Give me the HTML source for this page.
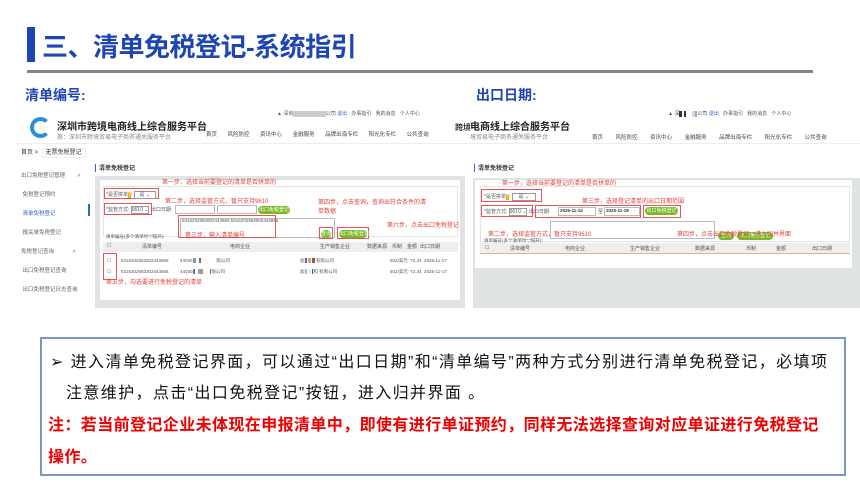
<!DOCTYPE html>
<html><head><meta charset="utf-8"><style>
*{margin:0;padding:0;box-sizing:border-box}
body{width:860px;height:492px;background:#fff;position:relative;overflow:hidden;font-family:"Liberation Sans","Noto Sans CJK SC",sans-serif}
.a{position:absolute;white-space:nowrap}
.t{font-size:6px;color:#555}
.r{color:#e0443c;font-size:6px}
.rb{position:absolute;border:1.5px solid #e8545a}
.g{background:#7bb827;color:#fff;border-radius:5px;font-size:5px;text-align:center;line-height:8px;height:8px;position:absolute}
.in{position:absolute;border:1px solid #bbb;background:#fff;height:9px}
</style></head><body>
<div class="a" style="left:27px;top:27px;width:8px;height:35px;background:#1d45b3"></div>
<div class="a" style="left:42px;top:27px;font-size:26px;font-weight:bold;color:#1d45b3;letter-spacing:-0.5px">三、清单免税登记-系统指引</div>
<div class="a" style="left:27px;top:70px;width:786px;height:3px;background:#858585"></div>
<div class="a" style="left:25px;top:85px;font-size:14px;font-weight:bold;color:#1d45b3">清单编号:</div>
<div class="a" style="left:476px;top:85px;font-size:14px;font-weight:bold;color:#1d45b3">出口日期:</div>

<!-- LEFT SCREENSHOT -->
<div class="a" style="left:15px;top:108px;width:455px;height:200px;background:#fff;overflow:hidden">
 <div class="a" style="left:0;top:35px;width:455px;height:1px;background:#eee"></div>
 <div class="a" style="left:15px;top:9px;width:21px;height:21px;border-radius:50%;border:4px solid #2a8fd6;border-right-color:#fff"></div>
 <div class="a" style="left:42px;top:10px;font-size:10px;font-weight:bold;color:#222">深圳市跨境电商线上综合服务平台</div>
 <div class="a t" style="left:42px;top:24px;font-size:6px;color:#888">原：深圳市跨境贸易电子商务通关服务平台</div>
 <div class="a t" style="left:262px;top:2px;font-size:5px">▲ 深圳<span style="background:#ccc;color:#ccc">xxxxxxxxxxxxx</span>公司 <span style="color:#36c">退出</span>&nbsp;&nbsp; 办事指引 &nbsp; 我的消息 &nbsp; 个人中心</div>
 <div class="a" style="left:191px;top:22px;font-size:5.5px;color:#444;word-spacing:9px">首页 风险防控 资讯中心 金融服务 品牌出海专栏 阳光化专栏 公共查询</div>
 <div class="a" style="left:440px;top:14px;font-size:8px;font-weight:bold;color:#333">跨境</div>
 <div class="a t" style="left:6px;top:39px;font-size:6px;color:#333">首页 &gt; &nbsp;<span style="border:1px solid #eee;padding:1px 3px">无票免税登记</span></div>
 <div class="a t" style="left:6px;top:59px;line-height:19px;font-size:5.5px;color:#666">出口免税登记管理 &nbsp;&nbsp;&nbsp;&nbsp;&nbsp;&nbsp;&nbsp;˄<br>&nbsp;免税登记预约<br>&nbsp;<span style="color:#36c">清单免税登记</span><br>&nbsp;报关单免税登记<br>免税登记查询 &nbsp;&nbsp;&nbsp;&nbsp;&nbsp;&nbsp;&nbsp;&nbsp;&nbsp;&nbsp;&nbsp;˄<br>&nbsp;出口免税登记查询<br>&nbsp;出口免税登记日志查询</div>
 <div class="a" style="left:73px;top:96px;width:2px;height:12px;background:#36c"></div>
 <div class="a" style="left:80px;top:56px;width:1px;height:8px;background:#36c"></div>
 <div class="a" style="left:84px;top:55px;font-size:6px;font-weight:bold;color:#333">清单免税登记</div>
 <div class="a" style="left:80px;top:68px;width:370px;height:132px;background:#dfe3e3"></div>
 <div class="a" style="left:85px;top:72px;width:360px;height:120px;background:#fff"></div>
 <div class="a" style="left:88px;top:78px;width:355px;height:51px;border:1px solid #e4e4e4"></div>
 <div class="rb" style="left:89px;top:80px;width:55px;height:11px"></div>
 <div class="a t" style="left:91px;top:83px;font-size:5px">*是否拼单<span style="background:#f4b000;color:#fff">?</span>: <span style="border:1px solid #999;padding:0 5px">是 ⌄</span></div>
 <div class="rb" style="left:89px;top:95px;width:48px;height:12px"></div>
 <div class="a t" style="left:91px;top:98px;font-size:5px">*监管方式: <span style="border:1px solid #999">9610 ⌄</span> 出口日期:</div>
 <div class="in" style="left:160px;top:97px;width:40px"></div><div class="a t" style="left:203px;top:98px;font-size:5px">至</div>
 <div class="in" style="left:202px;top:97px;width:40px"></div>
 <div class="g" style="left:243px;top:98px;width:32px">出口免税登记</div>
 <div class="in" style="left:165px;top:110px;width:155px;height:20px"></div>
 <div class="rb" style="left:163px;top:107px;width:98px;height:23px"></div>
 <div class="a t" style="left:167px;top:110px;font-size:4.5px">5316202582802443865;5316202582802443866</div>
 <div class="a t" style="left:91px;top:126px;font-size:4.5px">清单编号(多个清单时";"隔开):</div>
 <div class="rb" style="left:304px;top:119px;width:14px;height:12px"></div>
 <div class="g" style="left:306px;top:122px;width:10px">查询</div>
 <div class="rb" style="left:322px;top:119px;width:32px;height:12px"></div>
 <div class="g" style="left:324px;top:122px;width:28px">出口免税登记</div>
 <div class="a" style="left:88px;top:134px;width:355px;height:10px;background:#eee"></div>
 <div class="a t" style="left:92px;top:135px;font-size:5px">☐</div>
 <div class="a t" style="left:127px;top:135px;font-size:5px">清单编号</div>
 <div class="a t" style="left:215px;top:135px;font-size:5px">电商企业</div>
 <div class="a t" style="left:305px;top:135px;font-size:5px">生产销售企业</div>
 <div class="a t" style="left:352px;top:135px;font-size:5px">数据来源</div>
 <div class="a t" style="left:377px;top:135px;font-size:5px">币制</div>
 <div class="a t" style="left:392px;top:135px;font-size:5px">金额</div>
 <div class="a t" style="left:405px;top:135px;font-size:5px">出口日期</div>
 <div class="a t" style="left:92px;top:147px;font-size:4.5px;line-height:11px">☐<br>☐</div>
 <div class="a t" style="left:106px;top:147px;font-size:4.5px;line-height:11px">5316202583302443865<br>5316202583302443866</div>
 <div class="a t" style="left:165px;top:147px;font-size:4.5px;line-height:11px">44030<span style="background:#8899aa">&nbsp;&nbsp;&nbsp;</span> &nbsp;<span style="background:#7a6677">&nbsp;&nbsp;</span>&nbsp;&nbsp;&nbsp;&nbsp;&nbsp;&nbsp;&nbsp;&nbsp;&nbsp;&nbsp;&nbsp;&nbsp;限公司<br>44030<span style="background:#667799">&nbsp;&nbsp;</span> &nbsp;<span style="background:#88aacc">&nbsp;&nbsp;</span><span style="background:#c09070">&nbsp;&nbsp;</span>&nbsp;&nbsp;&nbsp;&nbsp;&nbsp;&nbsp;<span style="background:#777">&nbsp;</span>限公司</div>
 <div class="a t" style="left:285px;top:147px;font-size:4.5px;line-height:11px">加<span style="background:#5566aa">&nbsp;&nbsp;</span> <span style="background:#e9a060">&nbsp;&nbsp;</span> <span style="background:#8a5a6a">&nbsp;&nbsp;</span> 有限公司<br>加<span style="background:#99bbdd">&nbsp;&nbsp;</span> <span style="background:#ddeeff">&nbsp;&nbsp;</span> <span style="background:#555">&nbsp;</span>和 有限公司</div>
 <div class="a t" style="left:375px;top:147px;font-size:4.5px;line-height:11px">502/美元 &nbsp;72.34 &nbsp;2025-11-17<br>502/美元 &nbsp;72.34 &nbsp;2025-11-17</div>
 <div class="rb" style="left:88px;top:145px;width:14px;height:27px"></div>
 <div class="a r" style="left:147px;top:69px">第一步，选择当前要登记的清单是否拼单的</div>
 <div class="a r" style="left:150px;top:88px">第二步，选择监管方式，暂只支持9610</div>
 <div class="a r" style="left:170px;top:122px">第三步，输入清单编号</div>
 <div class="a r" style="left:303px;top:91px;line-height:9px">第四步，点击查询，查询出符合条件的清<br>单数据</div>
 <div class="a r" style="left:372px;top:112px">第六步，点击出口免税登记</div>
 <div class="a r" style="left:91px;top:169px">第五步，勾选要进行免税登记的清单</div>
</div>

<!-- RIGHT SCREENSHOT -->
<div class="a" style="left:470px;top:108px;width:390px;height:200px;background:#fff;overflow:hidden">
 <div class="a" style="left:0;top:35px;width:390px;height:1px;background:#eee"></div>
 <div class="a" style="left:0;top:10px;font-size:10px;font-weight:bold;color:#222">电商线上综合服务平台</div>
 <div class="a t" style="left:0;top:24px;font-size:6px;color:#888">境贸易电子商务通关服务平台</div>
 <div class="a t" style="left:198px;top:2px;font-size:5px">▲ 深<span style="background:#333">&nbsp;&nbsp;</span> <span style="background:#333">&nbsp;&nbsp;</span> &nbsp;&nbsp;&nbsp;<span style="background:#eccfd6">&nbsp;&nbsp;</span><span style="background:#99aadd">&nbsp;&nbsp;</span>公司 <span style="color:#36c">退出</span>&nbsp;&nbsp; 办事指引 &nbsp; 我的消息 &nbsp; 个人中心</div>
 <div class="a" style="left:122px;top:25px;font-size:5.5px;color:#444;word-spacing:11px">首页 风险防控 资讯中心 金融服务 品牌出海专栏 阳光化专栏 公共查询</div>
 <div class="a" style="left:4px;top:56px;width:1px;height:8px;background:#36c"></div>
 <div class="a" style="left:8px;top:55px;font-size:6px;font-weight:bold;color:#333">清单免税登记</div>
 <div class="a" style="left:3px;top:70px;width:387px;height:130px;background:#dfe3e3"></div>
 <div class="a" style="left:5px;top:72px;width:377px;height:88px;background:#fff"></div>
 <div class="a" style="left:10px;top:78px;width:370px;height:56px;border:1px solid #e4e4e4"></div>
 <div class="rb" style="left:11px;top:81px;width:61px;height:13px"></div>
 <div class="a t" style="left:14px;top:85px;font-size:5px">*是否拼单<span style="background:#f4b000;color:#fff">?</span>: <span style="border:1px solid #999;padding:0 6px">是 ⌄</span></div>
 <div class="rb" style="left:11px;top:97px;width:52px;height:12px"></div>
 <div class="a t" style="left:14px;top:100px;font-size:5px">*监管方式: <span style="border:1px solid #999">9610 ⌄</span> 出口日期:</div>
 <div class="rb" style="left:65px;top:97px;width:106px;height:13px"></div>
 <div class="in" style="left:88px;top:99px;width:38px"></div><div class="a t" style="left:90px;top:100px;font-size:4.5px;font-weight:bold;color:#333">2025-11-14</div>
 <div class="a t" style="left:128px;top:100px;font-size:5px">至</div>
 <div class="in" style="left:134px;top:99px;width:36px"></div><div class="a t" style="left:136px;top:100px;font-size:4.5px;font-weight:bold;color:#333">2025-11-18</div>
 <div class="rb" style="left:173px;top:97px;width:38px;height:13px"></div>
 <div class="g" style="left:175px;top:99px;width:33px">出口免税登记</div>
 <div class="in" style="left:80px;top:113px;width:165px;height:18px"></div>
 <div class="a t" style="left:14px;top:130px;font-size:4.5px">清单编号(多个清单时";"隔开):</div>
 <div class="g" style="left:248px;top:124px;width:16px">查询</div>
 <div class="g" style="left:267px;top:124px;width:36px">出口免税登记</div>
 <div class="a" style="left:10px;top:135px;width:370px;height:11px;background:#eee;border-bottom:1px solid #f0b070"></div>
 <div class="a t" style="left:15px;top:137px;font-size:5px">☐</div>
 <div class="a t" style="left:40px;top:137px;font-size:5px">清单编号</div>
 <div class="a t" style="left:95px;top:137px;font-size:5px">电商企业</div>
 <div class="a t" style="left:160px;top:137px;font-size:5px">生产销售企业</div>
 <div class="a t" style="left:225px;top:137px;font-size:5px">数据来源</div>
 <div class="a t" style="left:276px;top:137px;font-size:5px">币制</div>
 <div class="a t" style="left:306px;top:137px;font-size:5px">金额</div>
 <div class="a t" style="left:342px;top:137px;font-size:5px">出口日期</div>
 <div class="a r" style="left:32px;top:70px">第一步，选择当前要登记的清单是否拼单的</div>
 <div class="a r" style="left:112px;top:88px">第三步，选择登记清单的出口日期范围</div>
 <div class="a r" style="left:18px;top:121px">第二步，选择监管方式，暂只支持9610</div>
 <div class="a r" style="left:207px;top:121px">第四步，点击出口免税登记，进入归并界面</div>
</div>

<!-- TEXT BOX -->
<div class="a" style="left:40px;top:337px;width:806px;height:139px;border:2px solid #7a97c8"></div>
<div class="a" style="left:50px;top:347px;font-size:16px;color:#111;line-height:31px;letter-spacing:1.4px">➢ 进入清单免税登记界面，可以通过“出口日期”和“清单编号”两种方式分别进行清单免税登记，必填项</div>
<div class="a" style="left:66px;top:378px;font-size:16px;color:#111;line-height:31px;letter-spacing:1.4px">注意维护，点击“出口免税登记”按钮，进入归并界面 。</div>
<div class="a" style="left:48px;top:410px;font-size:16px;font-weight:bold;color:#ee0000;line-height:32px;letter-spacing:0.4px">注：若当前登记企业未体现在申报清单中，即使有进行单证预约，同样无法选择查询对应单证进行免税登记</div>
<div class="a" style="left:48px;top:442px;font-size:16px;font-weight:bold;color:#ee0000;line-height:32px;letter-spacing:0.4px">操作。</div>
</body></html>
